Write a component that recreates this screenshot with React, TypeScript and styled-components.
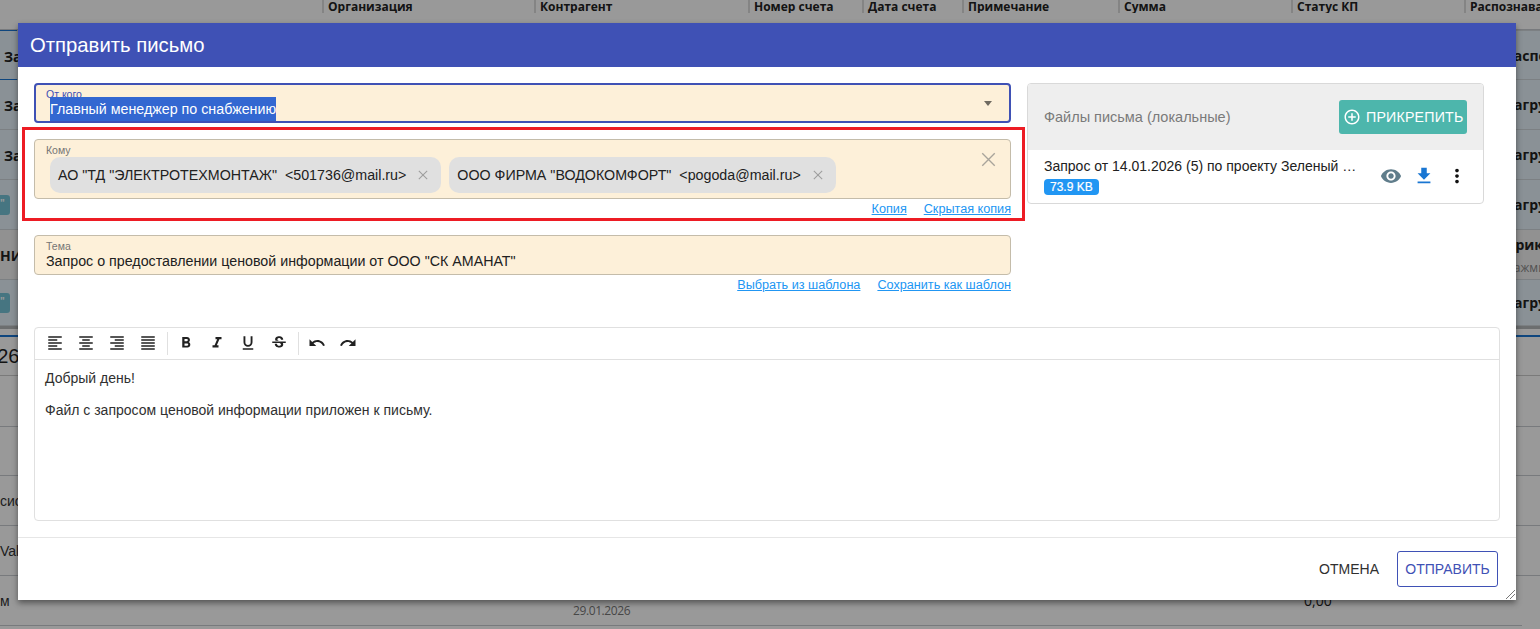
import React from "react";
import styled, { createGlobalStyle } from "styled-components";

const Global = createGlobalStyle`
  html, body { margin: 0; padding: 0; background: #fff; overflow: hidden; }
  body { font-family: "Liberation Sans", Arial, sans-serif; color: #212121; }
  * { box-sizing: border-box; }
`;

const Page = styled.div`
  position: relative;
  width: 1540px;
  height: 629px;
  overflow: hidden;
  background: #fff;
`;

/* ---------- page behind the dialog ---------- */
const COLS = "322px 212px 214px 114px 100px 156px 173px 173px 76px";

const HeadRow = styled.div`
  display: grid;
  grid-template-columns: ${COLS};
  height: 30px;
  border-bottom: 1px solid #c8ccd0;
  background: #fff;
`;
const HeadCell = styled.div<{ $rule?: boolean }>`
  padding: 0 0 0 4px;
  height: 13px;
  font: 700 12px/13px "Open Sans", sans-serif;
  white-space: nowrap;
  overflow: hidden;
  color: #222;
  border-left: ${(p) => (p.$rule ? "2px solid #ddd" : "none")};
`;

const TaskRow = styled.div<{ $plain?: boolean; $h?: number; $accent?: boolean }>`
  display: flex;
  justify-content: space-between;
  align-items: center;
  height: ${(p) => p.$h ?? 50}px;
  background: ${(p) => (p.$plain ? "#f2f2f2" : "#e6f2fa")};
  border-bottom: 1px solid #cfd5da;
  ${(p) =>
    p.$accent
      ? `border-top: 1px solid #cfd5da;
         border-image: linear-gradient(to right, #1976d2 18px, #cfd5da 18px) 1;`
      : ""}
`;
const LeftText = styled.div<{ $inset?: number }>`
  padding: 2px 0 0 ${(p) => p.$inset ?? 4}px;
  font: 700 14px "Open Sans", sans-serif;
  color: #222;
  white-space: nowrap;
`;
const TealTag = styled.div`
  width: 10px;
  height: 20px;
  padding-top: 3px;
  border-radius: 0 3px 3px 0;
  background: #76c4d8;
  color: #fff;
  font: 700 10px/10px "Open Sans", sans-serif;
  text-align: left;
`;
const RightCell = styled.div`
  width: 35px;
  overflow: hidden;
  white-space: nowrap;
  font: 700 14px "Open Sans", sans-serif;
  color: #222;
`;
const RightStack = styled(RightCell)`
  padding-top: 4px;
`;
const Faint = styled.div`
  font: 400 12px/20px "Open Sans", sans-serif;
  color: #888;
  margin-top: 4px;
`;
const ThickRule = styled.div`
  height: 3px;
  background: #b4b7ba;
`;
const BlueRule = styled.div`
  height: 2px;
  margin-top: 6px;
  background: #1976d2;
`;
const BigRow = styled.div`
  height: 39px;
  border-bottom: 1px solid #ccc;
  font: 400 20px/38px "Liberation Sans", sans-serif;
  color: #222;
  text-indent: -25px;
  overflow: hidden;
`;
const PlainRow = styled.div<{ $h?: number; $end?: boolean }>`
  display: grid;
  grid-template-columns: 534px 752px 254px;
  align-items: center;
  height: ${(p) => p.$h ?? 50}px;
  width: ${(p) => (p.$end ? "1522px" : "100%")};
  border-bottom: 1px solid #c8ccd0;
  font: 400 14px "Liberation Sans", sans-serif;
  color: #333;
`;
const DateText = styled.div`
  padding: 20px 0 0 39px;
  font: 400 12px "Open Sans", sans-serif;
  letter-spacing: -0.4px;
  color: #777;
`;
const SumText = styled.div`
  padding-left: 18px;
  font: 400 14px "Open Sans", sans-serif;
  color: #222;
`;

const Backdrop = styled.div`
  position: absolute;
  inset: 0;
  background: rgba(0, 0, 0, 0.4);
`;

/* ---------- dialog ---------- */
const Dialog = styled.div`
  position: absolute;
  left: 18px;
  top: 23px;
  width: 1498px;
  height: 577px;
  display: flex;
  flex-direction: column;
  background: #fff;
  box-shadow: 0 3px 6px rgba(0, 0, 0, 0.45);
`;
const DialogHeader = styled.div`
  height: 44px;
  flex: none;
  display: flex;
  align-items: center;
  padding-left: 12px;
  background: #3f51b5;
  color: #fff;
  font-size: 20.3px;
`;
const DialogBody = styled.div`
  flex: 1;
  display: flex;
  flex-direction: column;
  padding: 16px;
  min-height: 0;
`;
const TopGrid = styled.div`
  display: grid;
  grid-template-columns: 977px 457px;
  column-gap: 16px;
  height: 244px;
  flex: none;
`;
const FormColumn = styled.div`
  display: flex;
  flex-direction: column;
`;
const Field = styled.div<{ $focused?: boolean; $h: number }>`
  position: relative;
  height: ${(p) => p.$h}px;
  flex: none;
  background: #fdf0d9;
  border: ${(p) => (p.$focused ? "2px solid #3f51b5" : "1px solid #c4bcaa")};
  border-radius: 4px;
`;
const FieldLabel = styled.div<{ $focused?: boolean; $top: number }>`
  position: absolute;
  left: ${(p) => (p.$focused ? 10 : 11)}px;
  top: ${(p) => p.$top}px;
  font-size: 10.5px;
  line-height: 12px;
  color: ${(p) => (p.$focused ? "#3f51b5" : "#757575")};
`;
const SelectValue = styled.div`
  position: absolute;
  left: 14px;
  top: 12px;
  height: 24px;
  display: flex;
  align-items: center;
  background: #3367d1;
  color: #fff;
  font-size: 14.25px;
  white-space: nowrap;
`;
const DropArrow = styled.div`
  position: absolute;
  right: 17px;
  top: 16px;
  width: 0;
  height: 0;
  border-left: 4px solid transparent;
  border-right: 4px solid transparent;
  border-top: 5px solid #6f6a60;
`;
const ChipRow = styled.div`
  display: flex;
  gap: 8px;
  padding: 17px 0 0 15px;
`;
const Chip = styled.div`
  height: 36px;
  display: flex;
  align-items: center;
  padding: 0 13px 0 8px;
  border-radius: 10px;
  background: #e0e0e0;
  color: #212121;
  font-size: 14.25px;
  white-space: pre;
`;
const ChipClose = styled.span`
  display: inline-flex;
  margin-left: 12px;
  color: #9e9e9e;
`;
const ClearAll = styled.span`
  position: absolute;
  right: 14px;
  top: 12px;
  display: flex;
  color: #a8a49b;
`;
const SubjectText = styled.div`
  position: absolute;
  left: 11px;
  top: 16px;
  font-size: 14.25px;
  line-height: 18px;
  color: #212121;
  white-space: nowrap;
`;
const LinkRow = styled.div<{ $h: number }>`
  display: flex;
  justify-content: flex-end;
  gap: 17px;
  height: ${(p) => p.$h}px;
  padding-top: 3px;
  flex: none;
`;
const TextLink = styled.a`
  font-size: 12.65px;
  line-height: 14px;
  color: #2196f3;
  text-decoration: underline;
`;
const Spaced = styled.div`
  height: 16px;
  flex: none;
`;

const FilesPanel = styled.div`
  align-self: start;
  border: 1px solid #d9d9d9;
  border-radius: 4px;
  height: 121px;
  overflow: hidden;
`;
const FilesHead = styled.div`
  height: 66px;
  display: flex;
  align-items: center;
  justify-content: space-between;
  padding: 0 16px;
  background: #eeeeee;
  color: #7a7a7a;
  font-size: 14.5px;
`;
const AttachButton = styled.button`
  width: 128px;
  height: 34px;
  display: flex;
  align-items: center;
  gap: 5px;
  margin: 0;
  padding: 0 0 0 4px;
  border: 0;
  border-radius: 3px;
  background: #4db6ac;
  color: #fff;
  font: 400 14.2px "Liberation Sans", sans-serif;
  letter-spacing: 0.2px;
`;
const FileRow = styled.div`
  display: flex;
  align-items: center;
  padding: 8px 16px 0 16px;
`;
const FileInfo = styled.div`
  width: 314px;
  flex: none;
`;
const FileName = styled.div`
  font-size: 14px;
  line-height: 16px;
  white-space: nowrap;
  overflow: hidden;
  text-overflow: ellipsis;
  color: #212121;
`;
const SizeBadge = styled.div`
  display: inline-block;
  margin-top: 5px;
  height: 16px;
  padding: 0 6px;
  border-radius: 4px;
  background: #2196f3;
  color: #fff;
  font-size: 12px;
  line-height: 16px;
  -webkit-text-stroke: 0.2px #fff;
`;
const FileActions = styled.div`
  display: flex;
  align-items: center;
  margin: -2px 0 0 22px;
  gap: 11px;
  height: 24px;
`;
const ActionIcon = styled.span<{ $color: string }>`
  display: flex;
  color: ${(p) => p.$color};
`;

const Editor = styled.div`
  height: 194px;
  flex: none;
  display: flex;
  flex-direction: column;
  border: 1px solid #e0e0e0;
  border-radius: 4px;
`;
const Toolbar = styled.div`
  height: 32px;
  flex: none;
  display: flex;
  align-items: center;
  padding-left: 4px;
  border-bottom: 1px solid #e0e0e0;
  color: #212121;
`;
const ToolButton = styled.span`
  width: 31px;
  height: 24px;
  margin-top: -2px;
  display: flex;
  align-items: center;
  justify-content: center;
`;
const ToolSep = styled.span`
  width: 1px;
  height: 23px;
  margin: 0 2px 0 4px;
  background: #e0e0e0;
`;
const EditorText = styled.div`
  padding: 9px 10px;
  font-size: 14px;
  line-height: 18px;
  color: #303030;
`;
const EditorPara = styled.p`
  margin: 0 0 14px;
`;

const DialogFooter = styled.div`
  height: 63px;
  flex: none;
  display: flex;
  align-items: center;
  justify-content: flex-end;
  gap: 18px;
  padding: 0 18px 0 0;
  border-top: 1px solid #e6e6e6;
`;
const CancelButton = styled.button`
  padding: 0;
  border: 0;
  background: none;
  color: #303030;
  font: 400 14px "Liberation Sans", sans-serif;
`;
const SendButton = styled.button`
  width: 101px;
  height: 36px;
  padding: 0;
  border: 1px solid #3f51b5;
  border-radius: 3px;
  background: #fff;
  color: #3f51b5;
  font: 400 14px "Liberation Sans", sans-serif;
`;
const ResizeGrip = styled.svg`
  position: absolute;
  right: 1px;
  bottom: 1px;
`;
const Highlight = styled.div`
  position: absolute;
  left: 4px;
  top: 104px;
  width: 1003px;
  height: 94px;
  border: 3px solid #ed1c24;
  pointer-events: none;
`;

const Mdi = ({ d, size = 18 }: { d: string; size?: number }) => (
  <svg width={size} height={size} viewBox="0 0 24 24" fill="currentColor">
    <path d={d} />
  </svg>
);
const Cross = ({ size, weight }: { size: number; weight: number }) => (
  <svg width={size} height={size} viewBox="0 0 12 12" fill="none" stroke="currentColor" strokeWidth={weight}>
    <path d="M1 1L11 11M11 1L1 11" />
  </svg>
);

const ALIGN = [
  "M3,3H21V5H3V3M3,7H15V9H3V7M3,11H21V13H3V11M3,15H15V17H3V15M3,19H21V21H3V19Z",
  "M3,3H21V5H3V3M7,7H17V9H7V7M3,11H21V13H3V11M7,15H17V17H7V15M3,19H21V21H3V19Z",
  "M3,3H21V5H3V3M9,7H21V9H9V7M3,11H21V13H3V11M9,15H21V17H9V15M3,19H21V21H3V19Z",
  "M3,3H21V5H3V3M3,7H21V9H3V7M3,11H21V13H3V11M3,15H21V17H3V15M3,19H21V21H3V19Z",
];
const MARKS = [
  "M13.5,15.5H10V12.5H13.5A1.5,1.5 0 0,1 15,14A1.5,1.5 0 0,1 13.5,15.5M10,6.5H13A1.5,1.5 0 0,1 14.5,8A1.5,1.5 0 0,1 13,9.5H10M15.6,10.79C16.57,10.11 17.25,9 17.25,8C17.25,5.74 15.5,4 13.25,4H7V18H14.04C16.14,18 17.75,16.3 17.75,14.21C17.75,12.69 16.89,11.39 15.6,10.79Z",
  "M10,4V7H12.21L8.79,15H6V18H14V15H11.79L15.21,7H18V4H10Z",
  "M5,21H19V19H5V21M12,17A6,6 0 0,0 18,11V3H15.5V11A3.5,3.5 0 0,1 12,14.5A3.5,3.5 0 0,1 8.5,11V3H6V11A6,6 0 0,0 12,17Z",
  "M7.24 8.75c-.26-.48-.39-1.03-.39-1.67 0-.61.13-1.16.4-1.67.26-.5.63-.93 1.11-1.29.48-.35 1.05-.63 1.7-.83.66-.19 1.39-.29 2.18-.29.81 0 1.54.11 2.21.34.66.22 1.23.54 1.69.94.47.4.83.88 1.08 1.43.25.55.38 1.15.38 1.81h-3.01c0-.31-.05-.59-.15-.85-.09-.27-.24-.49-.44-.68-.2-.19-.45-.33-.75-.44-.3-.1-.66-.16-1.06-.16-.39 0-.74.04-1.03.13-.29.09-.53.21-.72.36-.19.16-.34.34-.44.55-.1.21-.15.43-.15.66 0 .48.25.88.74 1.21.38.25.77.48 1.41.7H7.39c-.05-.08-.11-.17-.15-.25zM21 12v-2H3v2h9.62c.18.07.4.14.55.2.37.17.66.34.87.51.21.17.35.36.43.57.07.2.11.43.11.69 0 .23-.05.45-.14.66-.09.2-.23.38-.42.53-.19.15-.42.26-.71.35-.29.08-.63.13-1.01.13-.43 0-.83-.04-1.18-.13s-.66-.23-.91-.42c-.25-.19-.45-.44-.59-.75-.14-.31-.25-.76-.25-1.21H6.4c0 .55.08 1.13.24 1.58.16.45.37.85.65 1.21.28.35.6.66.98.92.37.26.78.48 1.22.65.44.17.9.3 1.38.39.48.08.96.13 1.44.13.8 0 1.53-.09 2.18-.28s1.21-.45 1.67-.79c.46-.34.82-.77 1.07-1.27s.38-1.07.38-1.71c0-.6-.1-1.14-.31-1.61-.05-.11-.11-.23-.17-.33H21V12z",
];
const HISTORY = [
  "M12.5,8C9.85,8 7.45,9 5.6,10.6L2,7V16H11L7.38,12.38C8.77,11.22 10.54,10.5 12.5,10.5C16.04,10.5 19.05,12.81 20.1,16L22.47,15.22C21.08,11.03 17.15,8 12.5,8Z",
  "M18.4,10.6C16.55,9 14.15,8 11.5,8C6.85,8 2.92,11.03 1.53,15.22L3.9,16C4.95,12.81 7.96,10.5 11.5,10.5C13.46,10.5 15.23,11.22 16.62,12.38L13,16H22V7L18.4,10.6Z",
];
const EYE =
  "M12 4.5C7 4.5 2.73 7.61 1 12c1.73 4.39 6 7.5 11 7.5s9.27-3.11 11-7.5c-1.73-4.39-6-7.5-11-7.5zM12 17c-2.76 0-5-2.24-5-5s2.24-5 5-5 5 2.24 5 5-2.24 5-5 5zm0-8c-1.66 0-3 1.34-3 3s1.34 3 3 3 3-1.34 3-3-1.34-3-3-3z";
const DOWNLOAD = "M19 9h-4V3H9v6H5l7 7 7-7zM5 18v2h14v-2H5z";
const DOTS =
  "M12 8c1.1 0 2-.9 2-2s-.9-2-2-2-2 .9-2 2 .9 2 2 2zm0 2c-1.1 0-2 .9-2 2s.9 2 2 2 2-.9 2-2-.9-2-2-2zm0 6c-1.1 0-2 .9-2 2s.9 2 2 2 2-.9 2-2-.9-2-2-2z";
const ADD_CIRCLE =
  "M13 7h-2v4H7v2h4v4h2v-4h4v-2h-4V7zm-1-5C6.49 2 2 6.49 2 12s4.49 10 10 10 10-4.49 10-10S17.51 2 12 2zm0 18c-4.41 0-8-3.59-8-8s3.59-8 8-8 8 3.59 8 8-3.59 8-8 8z";

const HEADERS = ["", "Организация", "Контрагент", "Номер счета", "Дата счета", "Примечание", "Сумма", "Статус КП", "Распознавание"];

export default function App() {
  return (
    <Page>
      <Global />
      <HeadRow>
        {HEADERS.map((h, i) => (
          <HeadCell key={i} $rule={i > 0}>{h}</HeadCell>
        ))}
      </HeadRow>
      <TaskRow $accent><LeftText>Запрос</LeftText><RightCell>Распо</RightCell></TaskRow>
      <TaskRow><LeftText>Запрос</LeftText><RightCell>Загру</RightCell></TaskRow>
      <TaskRow><LeftText>Запрос</LeftText><RightCell>Загру</RightCell></TaskRow>
      <TaskRow><TealTag>"</TealTag><RightCell>Загру</RightCell></TaskRow>
      <TaskRow $plain>
        <LeftText $inset={0}>НИ</LeftText>
        <RightStack>Прик<Faint>Нажми</Faint></RightStack>
      </TaskRow>
      <TaskRow $h={46}><TealTag>"</TealTag><RightCell>Загру</RightCell></TaskRow>
      <ThickRule />
      <BlueRule />
      <BigRow>2026</BigRow>
      <PlainRow $h={51} />
      <PlainRow $h={49} />
      <PlainRow><span>сио</span></PlainRow>
      <PlainRow><span>Valt</span></PlainRow>
      <PlainRow $end>
        <span>м</span>
        <DateText>29.01.2026</DateText>
        <SumText>0,00</SumText>
      </PlainRow>
      <Backdrop />
      <Dialog>
        <DialogHeader>Отправить письмо</DialogHeader>
        <DialogBody>
          <TopGrid>
            <FormColumn>
              <Field $focused $h={40}>
                <FieldLabel $focused $top={3}>От кого</FieldLabel>
                <SelectValue>Главный менеджер по снабжению</SelectValue>
                <DropArrow />
              </Field>
              <Spaced />
              <Field $h={60}>
                <FieldLabel $top={4}>Кому</FieldLabel>
                <ChipRow>
                  <Chip>
                    {'АО "ТД "ЭЛЕКТРОТЕХМОНТАЖ"  <501736@mail.ru>'}
                    <ChipClose><Cross size={10} weight={1.3} /></ChipClose>
                  </Chip>
                  <Chip>
                    {'ООО ФИРМА "ВОДОКОМФОРТ"  <pogoda@mail.ru>'}
                    <ChipClose><Cross size={10} weight={1.3} /></ChipClose>
                  </Chip>
                </ChipRow>
                <ClearAll><Cross size={15} weight={1.1} /></ClearAll>
              </Field>
              <LinkRow $h={36}>
                <TextLink>Копия</TextLink>
                <TextLink>Скрытая копия</TextLink>
              </LinkRow>
              <Field $h={40}>
                <FieldLabel $top={4}>Тема</FieldLabel>
                <SubjectText>Запрос о предоставлении ценовой информации от ООО "СК АМАНАТ"</SubjectText>
              </Field>
              <LinkRow $h={20}>
                <TextLink>Выбрать из шаблона</TextLink>
                <TextLink>Сохранить как шаблон</TextLink>
              </LinkRow>
            </FormColumn>
            <FilesPanel>
              <FilesHead>
                Файлы письма (локальные)
                <AttachButton>
                  <Mdi d={ADD_CIRCLE} size={18} />
                  ПРИКРЕПИТЬ
                </AttachButton>
              </FilesHead>
              <FileRow>
                <FileInfo>
                  <FileName>Запрос от 14.01.2026 (5) по проекту Зеленый квартал, этап 2</FileName>
                  <SizeBadge>73.9 KB</SizeBadge>
                </FileInfo>
                <FileActions>
                  <ActionIcon $color="#607d8b"><Mdi d={EYE} size={22} /></ActionIcon>
                  <ActionIcon $color="#1976d2"><Mdi d={DOWNLOAD} size={22} /></ActionIcon>
                  <ActionIcon $color="#111"><Mdi d={DOTS} size={22} /></ActionIcon>
                </FileActions>
              </FileRow>
            </FilesPanel>
          </TopGrid>
          <Editor>
            <Toolbar>
              {ALIGN.map((d) => <ToolButton key={d}><Mdi d={d} /></ToolButton>)}
              <ToolSep />
              {MARKS.map((d) => <ToolButton key={d}><Mdi d={d} /></ToolButton>)}
              <ToolSep />
              {HISTORY.map((d) => <ToolButton key={d}><Mdi d={d} /></ToolButton>)}
            </Toolbar>
            <EditorText>
              <EditorPara>Добрый день!</EditorPara>
              <EditorPara>Файл с запросом ценовой информации приложен к письму.</EditorPara>
            </EditorText>
          </Editor>
        </DialogBody>
        <DialogFooter>
          <CancelButton>ОТМЕНА</CancelButton>
          <SendButton>ОТПРАВИТЬ</SendButton>
        </DialogFooter>
        <ResizeGrip width="9" height="9" viewBox="0 0 9 9" fill="none" stroke="#777" strokeWidth="1">
          <path d="M0 9L9 0M4 9L9 4" />
        </ResizeGrip>
        <Highlight />
      </Dialog>
    </Page>
  );
}
